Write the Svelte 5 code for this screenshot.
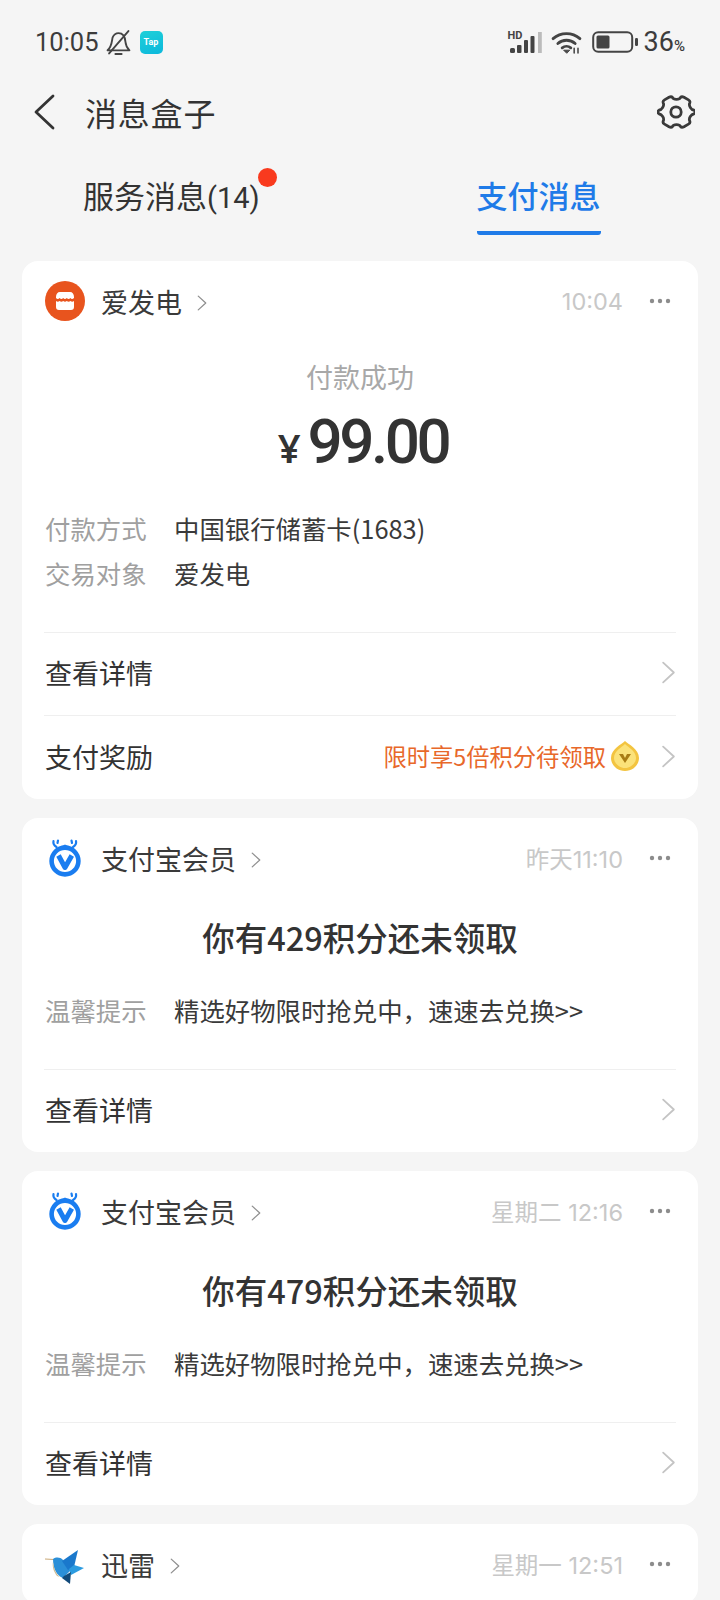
<script>
  const member = [
    { title: "你有429积分还未领取", time: "昨天11:10" },
    { title: "你有479积分还未领取", time: "星期二 12:16" },
  ];
</script>

{#snippet chevron(cls)}
  <svg class={cls} viewBox="0 0 16 28" fill="none" stroke="currentColor" stroke-width="2" stroke-linecap="round" stroke-linejoin="round"><path d="M2 3l12 11L2 25" /></svg>
{/snippet}

{#snippet dots()}
  <svg class="dots" viewBox="0 0 22 6" fill="#8c8c8c"><circle cx="3" cy="3" r="2.2" /><circle cx="11" cy="3" r="2.2" /><circle cx="19" cy="3" r="2.2" /></svg>
{/snippet}

{#snippet memberIcon()}
  <svg class="logo" viewBox="0 0 40 40">
    <path d="M8.500 3c-.5 2.500.5 4.500 3 6M31 3c.5 2.500-.5 4.500-3 6M13 2.500l-.5 2.500M26.500 2.500l.5 2.500" fill="none" stroke="#1a7df0" stroke-width="2.200" stroke-linecap="round" />
    <circle cx="20" cy="23" r="13.400" fill="none" stroke="#1a7df0" stroke-width="4.600" />
    <path d="M12.500 10.500L20 6.500l7.500 4z" fill="#1a7df0" />
    <path d="M13.500 17.500L20 29.500l6.800-12" fill="none" stroke="#1a7df0" stroke-width="5" stroke-linejoin="round" />
  </svg>
{/snippet}

{#snippet cardHead(name, time, logo)}
  <div class="head">
    {@render logo()}
    <span class="name">{name}</span>
    {@render chevron("small-chev")}
    <span class="time">{time}</span>
    {@render dots()}
  </div>
{/snippet}

{#snippet shopIcon()}
  <svg class="logo" viewBox="0 0 40 40">
    <circle cx="20" cy="20" r="20" fill="#e8541e" />
    <path d="M11 16c0-3 1.500-5 4-5h10c2.500 0 4 2 4 5v1c-1.300 1.400-2.700 1.400-3.600 0-1.200 1.400-2.400 1.400-3.600 0-1.200 1.400-2.400 1.400-3.600 0-1.200 1.400-2.400 1.400-3.600 0-1.200 1.400-2.400 1.400-3.600 0z" fill="#fff" />
    <path d="M11 20c1.300 1 2.400 1 3.600 0 1.200 1 2.400 1 3.600 0 1.200 1 2.400 1 3.600 0 1.200 1 2.400 1 3.600 0 1.200 1 2.400 1 3.600 0v6c0 2-1 3-3 3H14c-2 0-3-1-3-3z" fill="#fff" />
  </svg>
{/snippet}

{#snippet birdIcon()}
  <svg class="logo bird" viewBox="0 0 40 40">
    <path d="M0 14l9 .5" stroke="#c9a877" stroke-width="1" fill="none" />
    <path d="M8 14c3-2 7-2 10 1l8 10-8 8c-6-2-10-9-10-19z" fill="#2b8fd8" />
    <path d="M17 16L33 5l-4 17-6 3z" fill="#1a78cc" />
    <path d="M24 24l5-4 10 3-13 7z" fill="#2b9be0" />
    <path d="M19 31l7-4-1 12-8-6z" fill="#124a7a" />
    <path d="M8 17c1 7 3 12 7 15l-3-1c-3-4-5-9-4-14z" fill="#cdbb94" />
  </svg>
{/snippet}

<div class="page">
  <div class="status">
    <div class="status-left">
      <span class="clock">10:05</span>
      <svg class="bell" viewBox="0 0 24 24" fill="none" stroke="#444" stroke-width="1.800" stroke-linecap="round" stroke-linejoin="round">
        <path d="M1.500 19.500h21c-2-2-3.500-4-3.800-8C18.300 6 16 3 12 3 9.500 3 7.500 4.500 6.400 7 5.500 10 6 15.500 1.500 19.500z" />
        <path d="M9 23h6M3 22.500L21.500 1" />
      </svg>
      <span class="tap">Tap</span>
    </div>
    <div class="status-right">
      <div class="signal">
        <span class="hd">HD</span>
        <svg viewBox="0 0 33 21" fill="#444">
          <rect x="1" y="16" width="5" height="5" rx="1.500" />
          <rect x="8" y="13" width="4.500" height="8" rx="1" />
          <rect x="15" y="8" width="4" height="13" rx="1" />
          <rect x="21.500" y="4" width="4" height="17" rx="1" />
          <rect x="29" y="0" width="3.800" height="21" fill="#bbb" />
        </svg>
      </div>
      <svg class="wifi" viewBox="0 0 32 24" fill="none" stroke="#444" stroke-width="3" stroke-linecap="round">
        <path d="M2 8c8-7 20-7 28 0M7 13c5-4.500 13-4.500 18 0M11.500 17.500c2.600-2 6.400-2 9 0" />
        <path d="M16 23l-3-3h6z" fill="#444" stroke-width="1" />
        <path d="M24 23v-5M28 23v-5" stroke-width="1.600" />
      </svg>
      <svg class="battery" viewBox="0 0 46 22">
        <rect x="1.200" y="1.200" width="39" height="19.600" rx="5" fill="none" stroke="#444" stroke-width="2" />
        <rect x="4.500" y="4.500" width="13" height="13" rx="1.500" fill="#444" />
        <rect x="43" y="7" width="3" height="8" rx="1.200" fill="#444" />
      </svg>
      <span class="pct">36<small>%</small></span>
    </div>
  </div>

  <div class="nav">
    <svg class="back" viewBox="0 0 22 36" fill="none" stroke="#333" stroke-width="2.800" stroke-linecap="round" stroke-linejoin="round"><path d="M20 2L3 18l17 16" /></svg>
    <span class="nav-title">消息盒子</span>
    <svg class="gear" viewBox="0 0 38 38" fill="none" stroke="#3a3a3a" stroke-width="2.800" stroke-linejoin="round">
      <path d="M15 3.500c1 2.500 7 2.500 8 0 1-1.200 2-1 3.500-.2l4.500 2.600c1.400.8 1.800 1.800 1.200 3.200-1.300 2.600 1.600 6.600 4 6.900 1 .5 1.300 1 1.300 2v0c0 1-.3 1.500-1.300 2-2.400.3-5.300 4.300-4 6.900.6 1.400.2 2.400-1.200 3.200l-4.500 2.600c-1.500.8-2.500 1-3.500-.2-1-2.500-7-2.500-8 0-1 1.200-2 1-3.500.2L7 30.100c-1.400-.8-1.800-1.800-1.200-3.200 1.300-2.600-1.600-6.600-4-6.900-1-.5-1.300-1-1.300-2s.3-1.500 1.300-2c2.400-.3 5.300-4.300 4-6.900C5.200 7.700 5.600 6.700 7 5.900l4.500-2.600c1.500-.8 2.500-1 3.500.2z" transform="translate(.5 1)" />
      <circle cx="19" cy="19" r="5.200" />
    </svg>
  </div>

  <div class="tabs">
    <div class="tab">
      <span class="tab-label">服务消息<span class="count">(14)</span><i class="badge"></i></span>
    </div>
    <div class="tab">
      <span class="tab-label active">支付消息</span>
    </div>
  </div>

  <div class="list">
    <section class="card">
      {@render cardHead("爱发电", "10:04", shopIcon)}
      <div class="pay-label">付款成功</div>
      <div class="amount"><span class="yen">¥</span>99.00</div>
      <div class="info pay-info">
        <div class="info-row"><span class="key">付款方式</span><span class="val">中国银行储蓄卡(1683)</span></div>
        <div class="info-row"><span class="key">交易对象</span><span class="val">爱发电</span></div>
      </div>
      <div class="link">
        <span>查看详情</span>
        {@render chevron("big-chev")}
      </div>
      <div class="link">
        <span>支付奖励</span>
        <span class="promo">限时享5倍积分待领取</span>
        <svg class="coin" viewBox="0 0 30 32">
          <path d="M15 1c3 3 14 8 14 17 0 7-6 13-14 13S1 25 1 18C1 9 12 4 15 1z" fill="#f3c440" />
          <path d="M15 4c3 3 11 7 11 14 0 5-5 10-11 10S4 23 4 18C4 11 12 7 15 4z" fill="#fbe27a" />
          <path d="M9 14h4l2 4 2-4h4l-6 9z" fill="#a97c14" />
        </svg>
        {@render chevron("big-chev")}
      </div>
    </section>

    {#each member as item}
      <section class="card">
        {@render cardHead("支付宝会员", item.time, memberIcon)}
        <div class="card-title">{item.title}</div>
        <div class="info hint">
          <div class="info-row"><span class="key">温馨提示</span><span class="val">精选好物限时抢兑中，速速去兑换>></span></div>
        </div>
        <div class="link">
          <span>查看详情</span>
          {@render chevron("big-chev")}
        </div>
      </section>
    {/each}

    <section class="card">
      {@render cardHead("迅雷", "星期一 12:51", birdIcon)}
    </section>
  </div>
</div>

<style>
  :global(body) {
    margin: 0;
    background: #f5f5f5;
  }
  .page {
    height: 1600px;
    overflow: hidden;
    background: #f5f5f5;
    font-family: "Noto Sans CJK SC", "Noto Sans", sans-serif;
    color: #333;
  }
  .status {
    height: 84px;
    display: flex;
    justify-content: space-between;
    align-items: center;
    padding: 0 35px 0 35px;
    box-sizing: border-box;
  }
  .status-left,
  .status-right {
    display: flex;
    align-items: center;
  }
  .clock {
    font-family: Roboto, sans-serif;
    font-size: 25.500px;
    color: #3c3c3c;
  }
  .bell {
    width: 25px;
    height: 25px;
    margin-left: 7px;
  }
  .tap {
    width: 23px;
    height: 23px;
    margin-left: 9px;
    border-radius: 5px;
    background: linear-gradient(160deg, #1fd0d8, #0cb8dc);
    color: #fff;
    font: 700 9px/23px Roboto, sans-serif;
    text-align: center;
  }
  .signal {
    position: relative;
    width: 33px;
    height: 21px;
  }
  .signal svg {
    width: 33px;
    height: 21px;
    display: block;
  }
  .hd {
    position: absolute;
    left: -1px;
    top: -2px;
    font: 700 11px/12px Roboto, sans-serif;
    color: #444;
  }
  .wifi {
    width: 31px;
    height: 23px;
    margin-left: 9px;
  }
  .battery {
    width: 46px;
    height: 22px;
    margin-left: 10px;
  }
  .pct {
    margin-left: 6px;
    font-family: Roboto, sans-serif;
    font-size: 27px;
    color: #3c3c3c;
  }
  .pct small {
    font-size: 15px;
    font-weight: 500;
  }
  .nav {
    height: 56px;
    display: flex;
    align-items: center;
    padding: 0 25px 0 33px;
  }
  .back {
    width: 22px;
    height: 36px;
  }
  .nav-title {
    margin-left: 30px;
    font-size: 32px;
    letter-spacing: 0.8px;
    flex: 1;
  }
  .gear {
    width: 38px;
    height: 38px;
  }
  .tabs {
    display: flex;
    height: 121px;
    padding-top: 22px;
    box-sizing: border-box;
  }
  .tab {
    flex: 1;
    display: flex;
    justify-content: flex-start;
  }
  .tab:first-child {
    padding-left: 83px;
  }
  .tab:last-child {
    padding-left: 118px;
  }
  .tab-label {
    position: relative;
    height: 73px;
    font-size: 31px;
    line-height: 65px;
    white-space: nowrap;
    box-sizing: border-box;
  }
  .count {
    font-family: Roboto, sans-serif;
    font-size: 29px;
  }
  .tab-label.active {
    margin-left: 16px;
    color: #1f7be8;
    font-weight: 500;
    border-bottom: 4px solid #1f7be8;
    border-radius: 0 0 3px 3px;
  }
  .badge {
    position: absolute;
    left: 175px;
    top: 6px;
    width: 19px;
    height: 19px;
    border-radius: 50%;
    background: #f93a1e;
  }
  .list {
    padding: 0 22px;
  }
  .card {
    background: #fff;
    border-radius: 16px;
    margin-bottom: 19px;
    padding: 0 22px;
  }
  .head {
    height: 80px;
    display: flex;
    align-items: center;
  }
  .logo {
    width: 40px;
    height: 40px;
    margin-left: 1px;
    flex: none;
  }
  .bird {
    margin-top: 2px;
  }
  .name {
    margin-left: 16px;
    font-size: 27px;
    color: #3a3a3a;
  }
  .small-chev {
    width: 10px;
    height: 18px;
    margin-left: 15px;
    margin-top: 3px;
    color: #8f8f8f;
  }
  .time {
    margin-left: auto;
    font-family: Inter, "Noto Sans CJK SC", sans-serif;
    font-size: 23.500px;
    color: #c8c8c8;
  }
  .dots {
    width: 22px;
    height: 6px;
    margin-left: 26px;
    margin-right: 5px;
  }
  .pay-label {
    text-align: center;
    font-size: 27px;
    line-height: 38px;
    color: #a8a8a8;
    margin-top: 17px;
  }
  .amount {
    text-align: center;
    padding-left: 6px;
    font-family: Roboto, sans-serif;
    font-weight: 500;
    font-size: 62px;
    letter-spacing: -3.500px;
    line-height: 70px;
    color: #333;
    margin-top: 11px;
  }
  .yen {
    font-family: "Noto Sans", sans-serif;
    font-weight: 600;
    font-size: 40px;
    letter-spacing: 0;
    margin-right: 7px;
  }
  .info {
    font-size: 25.400px;
  }
  .pay-info {
    margin-top: 22px;
    padding-bottom: 37px;
  }
  .hint {
    margin-top: 28px;
    padding-bottom: 37px;
  }
  .info-row {
    display: flex;
    height: 45px;
    align-items: center;
    padding-left: 1px;
  }
  .key {
    width: 129px;
    color: #a0a0a0;
    flex: none;
  }
  .val {
    color: #3a3a3a;
  }
  .card-title {
    text-align: center;
    font-size: 32.500px;
    font-weight: 500;
    line-height: 44px;
    color: #333;
    margin-top: 17px;
    margin-bottom: 1px;
  }
  .link {
    height: 83px;
    padding-bottom: 3px;
    border-top: 1px solid #efefef;
    display: flex;
    align-items: center;
    font-size: 27px;
    color: #333;
    padding-left: 1px;
    box-sizing: border-box;
  }
  .link + .link {
    height: 84px;
  }
  .link > span:first-child {
    margin-right: auto;
  }
  .promo {
    font-size: 23.300px;
    color: #e8682a;
  }
  .coin {
    width: 30px;
    height: 32px;
    margin-left: 4px;
    margin-right: 21px;
  }
  .big-chev {
    width: 15px;
    height: 25px;
    color: #c4c4c4;
  }
</style>
